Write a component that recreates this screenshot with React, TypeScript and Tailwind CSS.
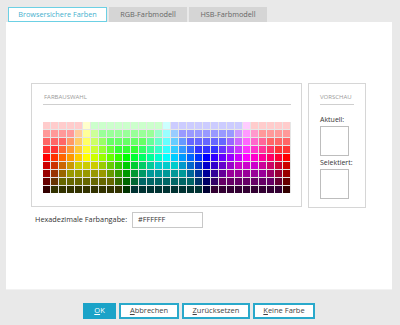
import React from "react";

const hex2 = (n: number) => n.toString(16).padStart(2, "0");

function pureColor(i: number): [number, number, number] {
  const s = Math.floor(i / 5);
  const k = (i % 5) * 0x33;
  switch (s) {
    case 0: return [0xff, k, 0];
    case 1: return [0xff - k, 0xff, 0];
    case 2: return [0, 0xff, k];
    case 3: return [0, 0xff - k, 0xff];
    case 4: return [k, 0, 0xff];
    case 5: return [0xff, 0, 0xff - k];
    default: return [0xff, 0, 0];
  }
}

const rows = [0xcc, 0x99, 0x66, 0x33, 0, -0xcc, -0x99, -0x66, -0x33];

function cellColor(col: number, row: number) {
  const p = pureColor(col);
  const lv = rows[row];
  const c = p.map((v) => (lv > 0 ? Math.max(v, lv) : lv < 0 ? Math.min(v, -lv) : v));
  return "#" + c.map(hex2).join("");
}

const cells: { c: string; k: string }[] = [];
for (let r = 0; r < 9; r++) for (let c = 0; c < 31; c++) cells.push({ c: cellColor(c, r), k: `${r}-${c}` });

const font = { fontFamily: '"Open Sans", "Noto Sans", sans-serif' };

function Btn({ first, rest, primary, w }: { first: string; rest: string; primary?: boolean; w: string }) {
  return (
    <button
      className={
        (primary
          ? "h-[16px] bg-[#1ba3c8] text-white text-[7.5px] leading-none flex items-center justify-center "
          : "h-[16px] bg-white border-2 border-[#2aa9cb] text-[#444] text-[7.5px] leading-none flex items-center justify-center ") + w
      }
    >
      <span className="underline">{first}</span>
      {rest}
    </button>
  );
}

export default function App() {
  return (
    <div className="w-[400px] h-[325px] bg-[#e9e9e9] flex flex-col" style={font}>
      <div className="flex pl-[8px] pt-[7px] gap-[2px]">
        <div className="h-[15px] w-[99px] bg-white border border-[#6cd0e4] text-[#45b0ce] text-[7.3px] flex items-center justify-center leading-none">
          Browsersichere Farben
        </div>
        <div className="h-[15px] w-[78px] bg-[#d5d5d5] text-[#666] text-[7.3px] flex items-center justify-center leading-none">
          RGB-Farbmodell
        </div>
        <div className="h-[15px] w-[78px] bg-[#d5d5d5] text-[#666] text-[7.3px] flex items-center justify-center leading-none">
          HSB-Farbmodell
        </div>
      </div>
      <div className="ml-[6px] w-[386px] h-[268px] bg-white border-b border-[#f2f2f2] flex flex-col pt-[61px] pl-[25px]">
        <div className="flex gap-[6px]">
          <div className="w-[271px] h-[124px] border border-[#d6d6d6] pt-[10px] pl-[11px]">
            <div className="w-[248px] text-[6px] text-[#9a9a9a] leading-none pb-[4px] border-b border-[#cfcfcf] pl-[1px]">
              FARBAUSWAHL
            </div>
            <div className="mt-[17px] grid grid-cols-[repeat(31,7px)] gap-px bg-[#e6e6e6] w-[248px] p-0">
              {cells.map((x) => (
                <div key={x.k} className="h-[7px]" style={{ backgroundColor: x.c }} />
              ))}
            </div>
          </div>
          <div className="w-[58px] h-[125px] border border-[#d6d6d6] pt-[10px] pl-[11px]">
            <div className="w-[34px] text-[6px] text-[#9a9a9a] leading-none pb-[4px] border-b border-[#cfcfcf] whitespace-nowrap">
              VORSCHAU
            </div>
            <div className="mt-[11px] text-[7px] text-[#333] leading-none">Aktuell:</div>
            <div className="mt-[3px] w-[29px] h-[30px] border border-[#bdbdbd]" />
            <div className="mt-[3px] text-[7px] text-[#333] leading-none">Selektiert:</div>
            <div className="mt-[3px] w-[29px] h-[30px] border border-[#bdbdbd]" />
          </div>
        </div>
        <div className="flex items-center mt-[4px] pl-[4px]">
          <span className="text-[7.3px] text-[#333] w-[97px] leading-none">Hexadezimale Farbangabe:</span>
          <div className="w-[71px] h-[16px] border border-[#c8c8c8] flex items-center pl-[5px] text-[7.3px] text-[#333] leading-none">
            #FFFFFF
          </div>
        </div>
      </div>
      <div className="flex justify-center gap-[3px] mt-[13px] pr-[2px]">
        <Btn first="O" rest="K" primary w="w-[33px]" />
        <Btn first="A" rest="bbrechen" w="w-[60px]" />
        <Btn first="Z" rest="urücksetzen" w="w-[68px]" />
        <Btn first="K" rest="eine Farbe" w="w-[62px]" />
      </div>
    </div>
  );
}
